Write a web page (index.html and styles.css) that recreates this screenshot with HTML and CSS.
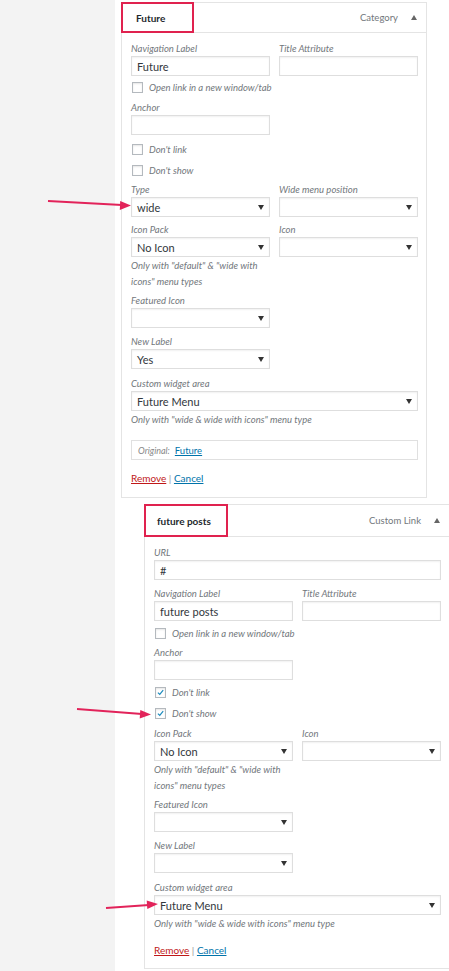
FILE: index.html
```html
<!DOCTYPE html>
<html lang="en">
<head>
    <meta charset="UTF-8">
    <meta name="viewport" content="width=device-width, initial-scale=1.0">
    <title>Menu items</title>
    <link rel="stylesheet" href="styles.css">
</head>
<body>
    <div class="page">
        <div class="gutter"></div>

        <div class="menu">
            <!-- Category item -->
            <div class="menu-item">
                <div class="item-bar">
                    <span class="item-title mark">Future</span>
                    <span class="item-type">Category</span>
                    <span class="toggle"></span>
                </div>
                <div class="item-settings">
                    <div class="row">
                        <div class="field">
                            <label>Navigation Label</label>
                            <div class="control">Future</div>
                        </div>
                        <div class="field">
                            <label>Title Attribute</label>
                            <div class="control"></div>
                        </div>
                    </div>
                    <div class="check first-check"><span class="box"></span>Open link in a new window/tab</div>
                    <div class="field half">
                        <label>Anchor</label>
                        <div class="control"></div>
                    </div>
                    <div class="check"><span class="box"></span>Don't link</div>
                    <div class="check"><span class="box"></span>Don't show</div>
                    <div class="row snug">
                        <div class="field">
                            <label>Type</label>
                            <div class="control select">wide<span class="arrow"></span></div>
                        </div>
                        <div class="field">
                            <label>Wide menu position</label>
                            <div class="control select"><span class="arrow"></span></div>
                        </div>
                    </div>
                    <div class="row snug">
                        <div class="field">
                            <label>Icon Pack</label>
                            <div class="control select">No Icon<span class="arrow"></span></div>
                        </div>
                        <div class="field">
                            <label>Icon</label>
                            <div class="control select"><span class="arrow"></span></div>
                        </div>
                    </div>
                    <p class="help half">Only with "default" &amp; "wide with icons" menu types</p>
                    <div class="field half">
                        <label>Featured Icon</label>
                        <div class="control select"><span class="arrow"></span></div>
                    </div>
                    <div class="field half">
                        <label>New Label</label>
                        <div class="control select">Yes<span class="arrow"></span></div>
                    </div>
                    <div class="field wide-gap">
                        <label>Custom widget area</label>
                        <div class="control select">Future Menu<span class="arrow"></span></div>
                    </div>
                    <p class="help">Only with "wide &amp; wide with icons" menu type</p>
                    <div class="original">Original: <a href="#">Future</a></div>
                    <div class="actions"><a href="#" class="remove">Remove</a> | <a href="#">Cancel</a></div>
                </div>
            </div>

            <!-- Custom link, one level deeper -->
            <div class="menu-item sub">
                <div class="item-bar">
                    <span class="item-title mark">future posts</span>
                    <span class="item-type">Custom Link</span>
                    <span class="toggle"></span>
                </div>
                <div class="item-settings">
                    <div class="field">
                        <label>URL</label>
                        <div class="control">#</div>
                    </div>
                    <div class="row">
                        <div class="field">
                            <label>Navigation Label</label>
                            <div class="control">future posts</div>
                        </div>
                        <div class="field">
                            <label>Title Attribute</label>
                            <div class="control"></div>
                        </div>
                    </div>
                    <div class="check"><span class="box"></span>Open link in a new window/tab</div>
                    <div class="field half">
                        <label>Anchor</label>
                        <div class="control"></div>
                    </div>
                    <div class="check"><span class="box checked"><svg viewBox="0 0 12 12"><path d="M2.5 6.2 L5 8.6 L9.6 2.8"/></svg></span>Don't link</div>
                    <div class="check"><span class="box checked"><svg viewBox="0 0 12 12"><path d="M2.5 6.2 L5 8.6 L9.6 2.8"/></svg></span>Don't show</div>
                    <div class="row">
                        <div class="field">
                            <label>Icon Pack</label>
                            <div class="control select">No Icon<span class="arrow"></span></div>
                        </div>
                        <div class="field">
                            <label>Icon</label>
                            <div class="control select"><span class="arrow"></span></div>
                        </div>
                    </div>
                    <p class="help half">Only with "default" &amp; "wide with icons" menu types</p>
                    <div class="field half">
                        <label>Featured Icon</label>
                        <div class="control select"><span class="arrow"></span></div>
                    </div>
                    <div class="field half">
                        <label>New Label</label>
                        <div class="control select"><span class="arrow"></span></div>
                    </div>
                    <div class="field wide-gap">
                        <label>Custom widget area</label>
                        <div class="control select">Future Menu<span class="arrow"></span></div>
                    </div>
                    <p class="help">Only with "wide &amp; wide with icons" menu type</p>
                    <div class="actions"><a href="#" class="remove">Remove</a> | <a href="#">Cancel</a></div>
                </div>
            </div>
        </div>

        <!-- Pointer arrows drawn on top -->
        <svg class="pointers" width="449" height="971" viewBox="0 0 449 971">
            <line x1="48" y1="201" x2="122" y2="205"/>
            <polygon points="131,205.5 120.2,201 119.8,210"/>
            <line x1="77" y1="709" x2="142" y2="714"/>
            <polygon points="151,714.5 140.3,710 139.7,718.5"/>
            <line x1="106" y1="908" x2="149" y2="905"/>
            <polygon points="158,904 146.7,900.5 147.3,909"/>
        </svg>
    </div>
</body>
</html>
```

FILE: styles.css
```css
/* Global Styles */
* {
    box-sizing: border-box;
}

body {
    margin: 0;
    font-family: Lato, "Open Sans", sans-serif;
    background-color: #f3f3f3;
    color: #32373c;
}

.page {
    display: flex;
    min-height: 100vh;
    position: relative;
}

.gutter {
    width: 115px;
    flex: none;
}

.menu {
    flex: 1;
    background-color: #fff;
    padding-top: 2px;
}

/* Menu item card */
.menu-item {
    width: 306px;
    margin-left: 6px;
}

.menu-item.sub {
    margin-left: 29px;
    margin-top: 6px;
}

.item-bar {
    display: flex;
    align-items: center;
    height: 31px;
    border: 1px solid #e4e4e4;
    padding-right: 9px;
}

.sub .item-bar {
    height: 33px;
}

.item-title {
    font-size: 10px;
    font-weight: 700;
    color: #23282d;
    align-self: stretch;
    display: flex;
    align-items: center;
    margin: -1px 0 -1px -1px;
}

.item-title.mark {
    border: 2px solid #e0224f;
    padding-left: 13px;
    width: 73px;
}

.sub .item-title.mark {
    padding-left: 11px;
    width: 84px;
}

.item-type {
    margin-left: auto;
    font-size: 9.5px;
    color: #72777c;
}

.toggle {
    width: 0;
    height: 0;
    margin-left: 13px;
    border-left: 3.5px solid transparent;
    border-right: 3.5px solid transparent;
    border-bottom: 5px solid #666;
}

/* Settings panel */
.item-settings {
    border: 1px solid #e4e4e4;
    border-top: none;
    padding: 9px 8px 12px 9px;
}

.sub .item-settings {
    padding-bottom: 11px;
}

.item-settings > * {
    margin-top: 7px;
}

.item-settings > *:first-child {
    margin-top: 0;
}

.row {
    display: grid;
    grid-template-columns: 139px 139px;
    column-gap: 9px;
}

.row.snug {
    margin-top: 6px;
}

.half {
    width: 139px;
}

.field label {
    display: block;
    font-size: 9.5px;
    font-style: italic;
    line-height: 14px;
    color: #72777c;
}

.field.wide-gap {
    margin-top: 8px;
}

.control {
    height: 20px;
    border: 1px solid #dedede;
    box-shadow: inset 0 1px 2px rgba(0, 0, 0, 0.06);
    background-color: #fff;
    display: flex;
    align-items: center;
    padding: 0 5px 0 5px;
    font-size: 11px;
    color: #32373c;
}

.select {
    justify-content: space-between;
}

.arrow {
    margin-left: auto;
    width: 0;
    height: 0;
    border-left: 3px solid transparent;
    border-right: 3px solid transparent;
    border-top: 5px solid #333;
}

/* Checkboxes */
.check {
    display: flex;
    align-items: center;
    gap: 6px;
    height: 14px;
    padding-left: 1px;
    font-size: 9.5px;
    font-style: italic;
    color: #72777c;
}

.check.first-check {
    margin-top: 4px;
}

.sub .item-settings > .check {
    margin-top: 5px;
}

.sub .item-settings > .check + .check {
    margin-top: 7px;
}

.sub .item-settings > .check + .field {
    margin-top: 6px;
}

.box {
    width: 11px;
    height: 11px;
    border: 1px solid #b4b9be;
    background-color: #fff;
    box-shadow: inset 0 1px 2px rgba(0, 0, 0, 0.1);
    display: flex;
}

.box svg {
    width: 100%;
    height: 100%;
    fill: none;
    stroke: #1e8cbe;
    stroke-width: 1.6;
}

/* Help text */
.help {
    margin: 1px 0 0 0;
    font-size: 9.5px;
    font-style: italic;
    line-height: 16px;
    color: #72777c;
}

.item-settings > .help + * {
    margin-top: 4px;
}

.original {
    margin-top: 12px;
    height: 20px;
    border: 1px solid #e0e0e0;
    display: flex;
    align-items: center;
    gap: 5px;
    padding-left: 6px;
    font-size: 9px;
    font-style: italic;
    color: #888;
}

.original a {
    font-style: normal;
    font-size: 9.5px;
    color: #0073aa;
}

.item-settings > .help + .original {
    margin-top: 12px;
}

.actions {
    line-height: 14px;
    font-size: 10px;
    color: #999;
}

.item-settings > .original + .actions,
.item-settings > .help + .actions {
    margin-top: 11px;
}

.actions a {
    color: #0073aa;
}

.actions a.remove {
    color: #c01818;
}

/* Annotation arrows */
.pointers {
    position: absolute;
    top: 0;
    left: 0;
    pointer-events: none;
}

.pointers line {
    stroke: #e2235a;
    stroke-width: 2;
}

.pointers polygon {
    fill: #e2235a;
}
```
